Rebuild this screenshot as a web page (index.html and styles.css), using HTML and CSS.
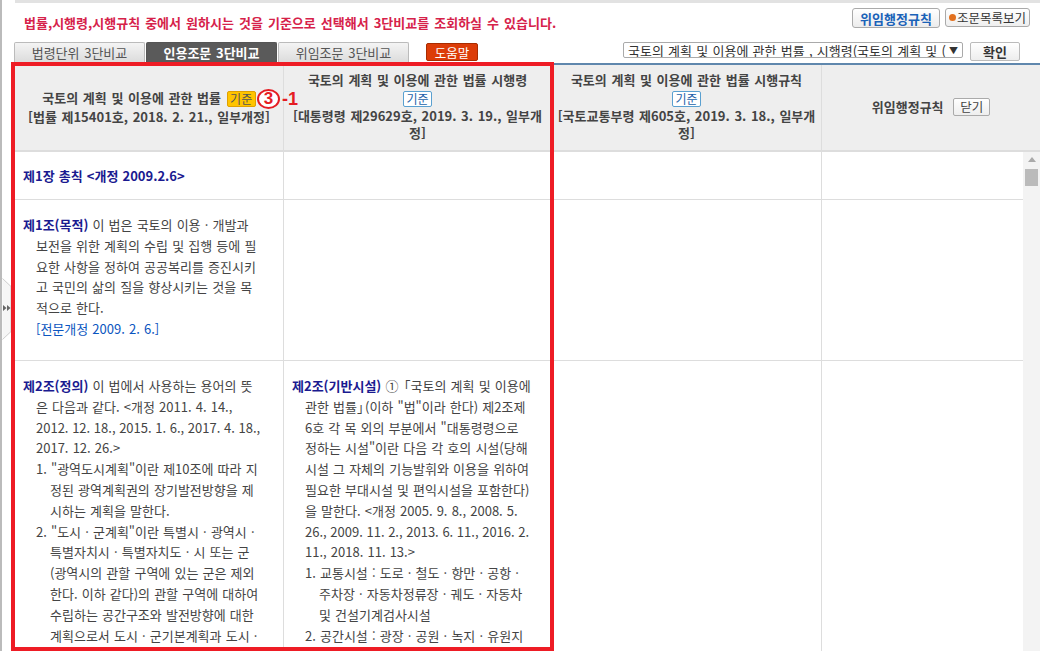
FILE: index.html
```html
<!DOCTYPE html>
<html lang="ko">
<head>
<meta charset="utf-8">
<title>3단비교</title>
<link rel="stylesheet" href="styles.css">
</head>
<body>
<div class="page">
  <div class="topline"></div>
  <div class="notice-row">
    <p class="notice">법률,시행령,시행규칙 중에서 원하시는 것을 기준으로 선택해서 3단비교를 조회하실 수 있습니다.</p>
    <div class="top-btns">
      <button class="btn-deleg">위임행정규칙</button>
      <button class="btn-list"><span class="dot"></span>조문목록보기</button>
    </div>
  </div>
  <div class="tab-row">
    <div class="tabs">
      <div class="tab">법령단위 3단비교</div>
      <div class="tab active">인용조문 3단비교</div>
      <div class="tab">위임조문 3단비교</div>
    </div>
    <button class="help">도움말</button>
    <div class="select-wrap">
      <div class="select"><span class="select-text">국토의 계획 및 이용에 관한 법률 , 시행령(국토의 계획 및 (</span><span class="arrow">▼</span></div>
      <button class="ok">확인</button>
    </div>
  </div>
  <div class="table">
    <div class="th c1"><div>국토의 계획 및 이용에 관한 법률 <span class="tag on">기준</span></div><div>[법률 제15401호, 2018. 2. 21., 일부개정]</div></div>
    <div class="th c2"><div>국토의 계획 및 이용에 관한 법률 시행령</div><div><span class="tag">기준</span></div><div>[대통령령 제29629호, 2019. 3. 19., 일부개정]</div></div>
    <div class="th c3"><div>국토의 계획 및 이용에 관한 법률 시행규칙</div><div><span class="tag">기준</span></div><div>[국토교통부령 제605호, 2019. 3. 18., 일부개정]</div></div>
    <div class="th c4"><div>위임행정규칙 <span class="close">닫기</span></div></div>

    <div class="td row1 c1"><a class="chapter">제1장 총칙 &lt;개정 2009.2.6&gt;</a></div>
    <div class="td row1"></div><div class="td row1"></div><div class="td row1"></div>

    <div class="td row2 c1">
      <p class="art"><b>제1조(목적)</b> 이 법은 국토의 이용 · 개발과 보전을 위한 계획의 수립 및 집행 등에 필요한 사항을 정하여 공공복리를 증진시키고 국민의 삶의 질을 향상시키는 것을 목적으로 한다.</p>
      <p class="rev">[전문개정 2009. 2. 6.]</p>
    </div>
    <div class="td row2"></div><div class="td row2"></div><div class="td row2"></div>

    <div class="td row3 c1">
      <p class="art"><b>제2조(정의)</b> 이 법에서 사용하는 용어의 뜻은 다음과 같다. &lt;개정 2011. 4. 14., <span class="dates">2012. 12. 18., 2015. 1. 6., 2017. 4. 18.,</span> 2017. 12. 26.&gt;</p>
      <p class="item">1. "광역도시계획"이란 제10조에 따라 지정된 광역계획권의 장기발전방향을 제시하는 계획을 말한다.</p>
      <p class="item">2. "도시 · 군계획"이란 특별시 · 광역시 · 특별자치시 · 특별자치도 · 시 또는 군(광역시의 관할 구역에 있는 군은 제외한다. 이하 같다)의 관할 구역에 대하여 수립하는 공간구조와 발전방향에 대한 계획으로서 도시 · 군기본계획과 도시 ·</p>
    </div>
    <div class="td row3 c2">
      <p class="art"><b>제2조(기반시설)</b> ① <span class="open">「</span>국토의 계획 및 이용에 관한 법률<span class="shut">」</span>(이하 "법"이라 한다) 제2조제6호 각 목 외의 부분에서 "대통령령으로 정하는 시설"이란 다음 각 호의 시설(당해 시설 그 자체의 기능발휘와 이용을 위하여 필요한 부대시설 및 편익시설을 포함한다)을 말한다. &lt;개정 2005. 9. 8., 2008. 5. <span class="dates">26., 2009. 11. 2., 2013. 6. 11., 2016. 2.</span> 11., 2018. 11. 13.&gt;</p>
      <p class="item">1. 교통시설 : 도로 · 철도 · 항만 · 공항 · 주차장 · 자동차정류장 · 궤도 · 자동차 및 건설기계검사시설</p>
      <p class="item">2. 공간시설 : 광장 · 공원 · 녹지 · 유원지</p>
    </div>
    <div class="td row3"></div><div class="td row3"></div>
  </div>

  <div class="scrollbar"><span class="up"></span><span class="thumb"></span></div>
  <div class="handle">
    <svg class="handle-svg" width="10" height="62" viewBox="0 0 10 62"><path d="M0.5 0.5L9 8.5V53.5L0.5 61.5" fill="#f6f6f6" stroke="#ccc"/><path d="M1 27l3.5 3-3.5 3zM5 27l3.5 3-3.5 3z" fill="#666"/></svg>
  </div>
  <div class="redbox"></div>
  <div class="mark"><span class="circle">3</span><span class="suffix">-1</span></div>
</div>
</body>
</html>
```
FILE: styles.css
```css
* { box-sizing: border-box; }
html, body { margin: 0; height: 100%; overflow: hidden; background: #fff; }
body { font-family: "Noto Sans CJK KR", "Liberation Sans", sans-serif; font-size: 13px; color: #333; }
button { font-family: inherit; cursor: pointer; padding: 0; }
p { margin: 0; }
.page { position: relative; width: 1040px; height: 651px; overflow: hidden; border-left: 2px solid #bbb; padding-left: 13px; }
.topline { height: 3px; background: #e2e2e2; }
.notice-row { display: flex; justify-content: space-between; height: 39px; }
.notice { color: #d6224a; font-size: 13px; font-weight: 700; line-height: 14px; padding: 13px 0 0 9px; word-spacing: 1.4px; white-space: nowrap; }
.top-btns { display: flex; gap: 5px; padding: 5px 10px 0 0; }
.btn-deleg { width: 88px; height: 20px; border: 1px solid #aaa; border-radius: 3px; background: linear-gradient(#fff, #ececec); color: #1a62b8; font-size: 13px; font-weight: 700; line-height: 17px; }
.btn-list { width: 85px; height: 19px; border: 1px solid #aaa; border-radius: 3px; background: linear-gradient(#fff, #efefef); color: #333; font-size: 12.5px; line-height: 16px; display: flex; align-items: center; justify-content: center; gap: 1px; }
.dot { width: 7px; height: 7px; border-radius: 50%; background: #e2701e; }
.tab-row { display: flex; height: 21px; }
.tabs { display: flex; gap: 1px; margin-left: -1px; }
.tab { width: 131px; height: 20px; border: 1px solid #bbb; border-bottom: 0; background: linear-gradient(#f4f4f4, #dcdcdc); text-align: center; font-size: 13px; line-height: 19px; color: #555; border-radius: 2px 2px 0 0; word-spacing: 1px; }
.tab.active { background: #5a5a5a; border-color: #555; color: #fff; font-weight: 700; }
.help { width: 52px; height: 18px; margin-left: 17px; background: #dc3c08; color: #fff; border: 1px solid #a82c00; border-radius: 2px; font-size: 12.5px; line-height: 15px; margin-top: 1px; }
.select-wrap { display: flex; gap: 7px; margin-left: auto; padding-right: 20px; }
.select { width: 340px; height: 16px; border: 1px solid #aaa; border-radius: 2px; display: flex; justify-content: space-between; align-items: center; padding: 0 4px; background: #fff; font-size: 13px; color: #333; overflow: hidden; word-spacing: .6px; }
.select-text { white-space: nowrap; overflow: hidden; }
.arrow { font-size: 9px; color: #333; padding-left: 3px; flex: none; }
.ok { width: 50px; height: 19px; border: 1px solid #bbb; border-radius: 2px; background: linear-gradient(#fff, #ededed); color: #333; font-size: 13px; font-weight: 700; line-height: 16px; }
.table { display: grid; grid-template-columns: 269px 268px 270px 219px; grid-template-rows: 87px 48px 161px 300px; border-top: 2px solid #5f87ad; margin-right: -1px; }
.th { background: #eee; border-right: 1px solid #ddd; border-bottom: 2px solid #ddd; text-align: center; font-weight: 700; color: #444; font-size: 13px; line-height: 17.5px; word-spacing: 1px; display: flex; flex-direction: column; justify-content: center; padding: 0 8px 2px; }
.th.c1 { padding: 0 4px 1px; line-height: 19px; }
.th.c3 { padding: 0 5px 2px; }
.tag { display: inline-block; height: 16px; width: 29px; border: 1px solid #5aa0d0; border-radius: 2px; background: #fff; color: #1d62a8; font-weight: 400; font-size: 12px; line-height: 14px; vertical-align: middle; word-spacing: 0; }
.tag.on { background: #ffc400; border-color: #e0a000; color: #555; margin-left: 1px; }
.close { display: inline-block; width: 37px; height: 18px; border: 1px solid #aaa; border-radius: 2px; background: linear-gradient(#fff, #eee); font-weight: 400; font-size: 12.5px; line-height: 16px; margin-left: 5px; }
.td { border-right: 1px solid #ddd; border-bottom: 1px solid #ddd; padding: 14px 22px 0 8px; font-size: 13px; line-height: 20.8px; word-spacing: .5px; color: #444; overflow: hidden; }
.row2 { padding-top: 15px; }
.row3 { padding-top: 15px; border-bottom: 0; padding-right: 20px; }
.chapter { color: #1a1a90; font-weight: 700; }
.art { padding-left: 13px; text-indent: -13px; }
.art b { color: #1a1a90; }
.dates { word-spacing: 0; }
.open { margin-left: -5px; }
.shut { margin-right: -5px; }
.rev { color: #0a55c0; padding-left: 13px; }
.item { padding-left: 27px; text-indent: -14px; }
.scrollbar { position: absolute; left: 1021px; top: 152px; width: 17px; height: 499px; background: #f3f3f3; display: flex; flex-direction: column; align-items: center; }
.up { width: 0; height: 0; border: 4px solid transparent; border-top: 0; border-bottom: 5px solid #aaa; margin: 5px 0 7px; }
.thumb { width: 13px; height: 17px; background: #bbb; }
.handle { position: absolute; left: 0; top: 278px; width: 10px; height: 62px; }
.handle-svg { display: block; }
.redbox { position: absolute; left: 9px; top: 62px; width: 543px; height: 589px; border: 4px solid #ee1c25; pointer-events: none; }
.mark { position: absolute; left: 255px; top: 89px; display: flex; align-items: center; gap: 2px; color: #e51c23; font-weight: 700; font-family: "Liberation Sans", sans-serif; }
.circle { width: 23px; height: 20px; border: 2px solid #e51c23; border-radius: 50%; background: #fff; text-align: center; font-size: 17px; line-height: 16px; }
.suffix { font-size: 18px; line-height: 20px; }
```
